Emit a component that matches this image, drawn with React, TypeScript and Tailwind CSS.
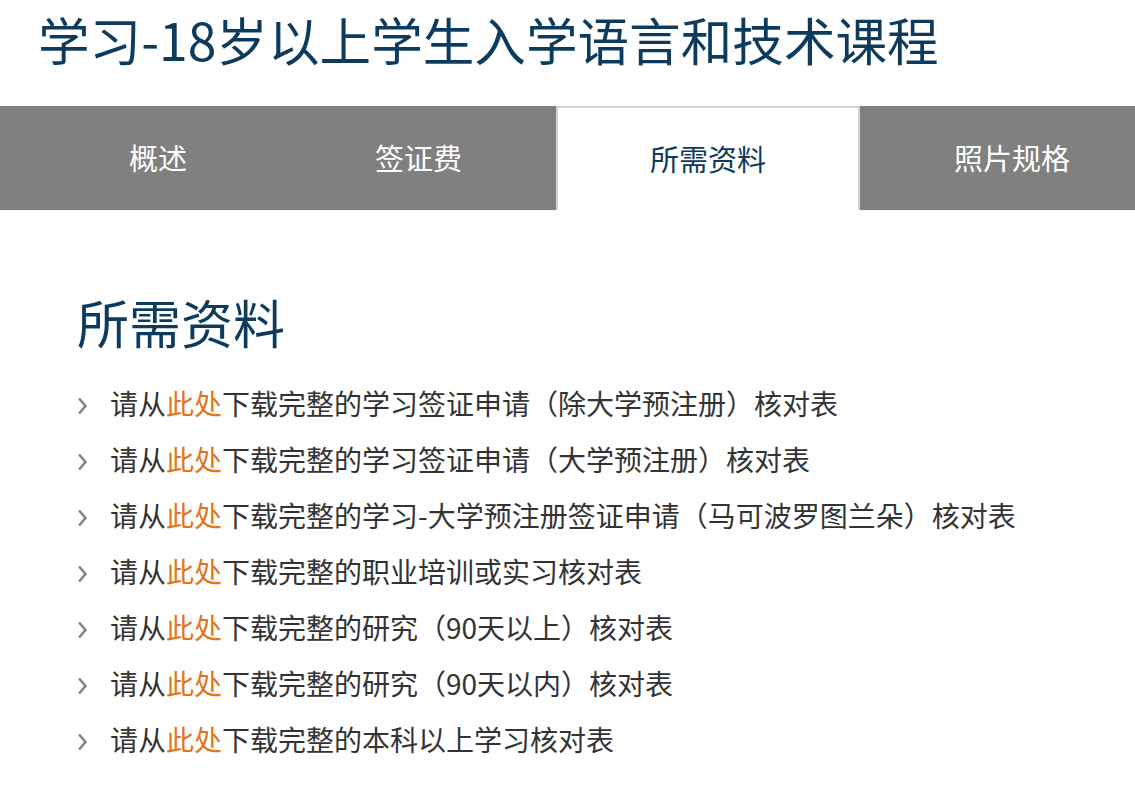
import React from 'react';

const tabs = ['概述', '签证费', '所需资料', '照片规格'];
const activeTab = 2;

const items: { before: string; after: string }[] = [
    { before: '请从', after: '下载完整的学习签证申请（除大学预注册）核对表' },
    { before: '请从', after: '下载完整的学习签证申请（大学预注册）核对表' },
    { before: '请从', after: '下载完整的学习-大学预注册签证申请（马可波罗图兰朵）核对表' },
    { before: '请从', after: '下载完整的职业培训或实习核对表' },
    { before: '请从', after: '下载完整的研究（90天以上）核对表' },
    { before: '请从', after: '下载完整的研究（90天以内）核对表' },
    { before: '请从', after: '下载完整的本科以上学习核对表' },
];

const Chevron: React.FC = () => (
    <svg width="11" height="18" viewBox="0 0 11 18" className="shrink-0 mt-[6px]">
        <path d="M2 1.5 L8.5 9 L2 16.5" fill="none" stroke="#858585" strokeWidth="2.6" />
    </svg>
);

const App: React.FC = () => {
    return (
        <div
            className="w-[1135px] h-[786px] bg-white overflow-hidden"
            style={{ fontFamily: '"Noto Sans CJK SC", "Noto Sans", sans-serif' }}
        >
            {/* Page title */}
            <h1 className="pt-[13px] pl-[38px] text-[51.6px] leading-[51px] text-[#0c3b5e] font-normal whitespace-nowrap">
                学习-18岁以上学生入学语言和技术课程
            </h1>

            {/* Tab bar */}
            <div className="mt-[42px] h-[104px] bg-[#808080] flex pl-[35px] overflow-hidden">
                {tabs.map((tab, idx) =>
                    idx === activeTab ? (
                        <div
                            key={idx}
                            className="h-full shrink-0 whitespace-nowrap px-[92px] flex items-center bg-white border-2 border-b-0 border-[#c9d7e3] text-[#0c3b5e] text-[29px]"
                        >
                            {tab}
                        </div>
                    ) : (
                        <div
                            key={idx}
                            className="h-full shrink-0 whitespace-nowrap px-[94px] flex items-center text-white text-[29px]"
                        >
                            {tab}
                        </div>
                    )
                )}
            </div>

            {/* Content */}
            <div className="pl-[77px] pt-[86px]">
                <h2 className="text-[52px] leading-[52px] text-[#0c3b5e] font-normal">所需资料</h2>
                <ul className="mt-[27px]">
                    {items.map((item, idx) => (
                        <li key={idx} className="h-[56px] flex items-center gap-[22px] text-[28px] leading-[56px] text-[#333333]">
                            <Chevron />
                            <span>
                                {item.before}
                                <a className="text-[#e0761c]">此处</a>
                                {item.after}
                            </span>
                        </li>
                    ))}
                </ul>
            </div>
        </div>
    );
};

export default App;
